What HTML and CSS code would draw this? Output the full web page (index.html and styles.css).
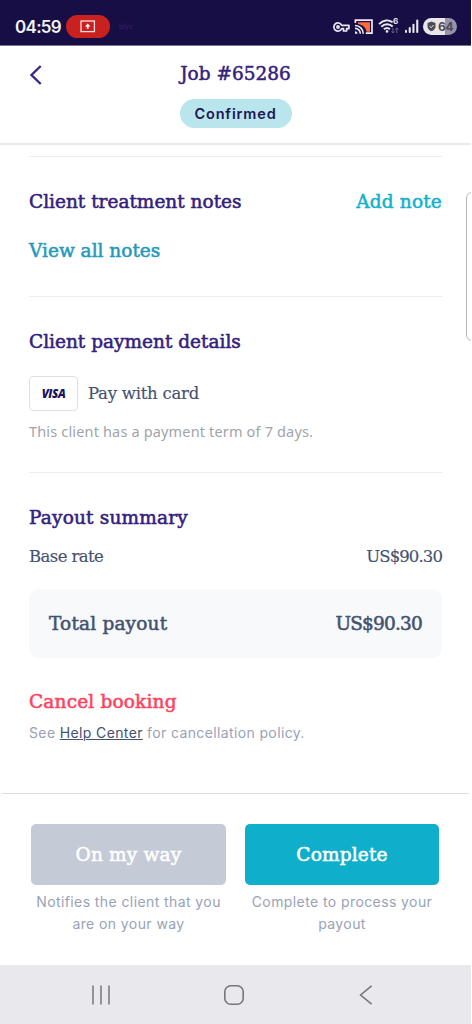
FILE: index.html
```html
<!DOCTYPE html>
<html lang="en">
<head>
<meta charset="utf-8">
<title>Job #65286</title>
<link rel="stylesheet" href="styles.css">
</head>
<body>
<div class="phone">
  <div class="status">
    <span class="clock">04:59</span>
    <span class="record">
      <svg width="16" height="13" viewBox="0 0 16 13"><rect x="1" y="1" width="13.4" height="10.6" fill="none" stroke="#f8dcdc" stroke-width="1.3"/><path d="M7.7 3.6 10.4 6.5H8.6V8.7H6.8V6.5H5z" fill="#fff"/></svg>
    </span>
    <span class="app-tag">blys</span>
    <span class="status-icons">
      <svg width="17" height="12" viewBox="0 0 17 12" fill="none" stroke="#e9e7f2" stroke-width="1.7"><path d="M8.7 4.3A4.1 4.1 0 1 0 8.7 7.7H10.5V10H13.6V7.7H15.9V4.3z" stroke-linejoin="round"/><circle cx="5" cy="6" r="1.1"/></svg>
      <svg width="20" height="16" viewBox="0 0 20 16"><path d="M4 3.2H16V12.8H12.6C11.7 8.4 8.5 5.7 4 5z" fill="#ff6a38"/><path d="M1.4 4V1.2H18V14.2H11.8" fill="none" stroke="#eeecf5" stroke-width="1.7"/><path d="M1 6.5A8 8 0 0 1 9.2 14.7M1 9.4A5.2 5.2 0 0 1 6.3 14.7" fill="none" stroke="#eeecf5" stroke-width="1.6"/><path d="M1 12.2A2.5 2.5 0 0 1 3.5 14.8H1z" fill="#eeecf5"/></svg>
      <span class="wifi">
        <svg width="22" height="17" viewBox="0 0 22 17" fill="none" stroke="#e9e7f2" stroke-width="1.9"><path d="M1 6.1C5.2 1.9 10.6 1.4 14.6 4.2M3.3 8.7C6.6 5.5 11.5 5.4 14.7 8.5M5.9 11.3C7.8 9.7 10.2 9.7 12 11.3"/><circle cx="9" cy="13.4" r="1.3" fill="#e9e7f2" stroke="none"/><path d="M14.9 10V15M13.3 13.4 14.9 15 16.5 13.4M18.8 15V10M17.2 11.6 18.8 10 20.4 11.6" stroke="#69628a" stroke-width="1"/></svg>
        <span class="wifi-gen">6</span>
      </span>
      <svg width="15" height="15" viewBox="0 0 15 15" fill="#e9e7f2"><rect x="1" y="10.8" width="2" height="3.2" rx="1"/><rect x="4.7" y="8" width="2.1" height="6" rx="1"/><rect x="8.4" y="4.8" width="2.1" height="9.2" rx="1"/><rect x="12.2" y=".5" width="2.1" height="13.5" rx="1"/></svg>
      <span class="battery">
        <svg width="9" height="11" viewBox="0 0 9 11"><path d="M4.5.5 8.5 2V5.5C8.5 7.8 7 9.2 4.5 10.3 2 9.2.5 7.8.5 5.5V2z" fill="#4c4a53"/><path d="M2.6 5.2 4.1 6.7 6.6 4" fill="none" stroke="#eee" stroke-width="1"/></svg>
        <span>64</span>
      </span>
    </span>
  </div>

  <header class="header">
    <svg class="back" width="14" height="22" viewBox="0 0 14 22"><path d="M11.7 2 2.5 11 11.7 20" fill="none" stroke="#3b2785" stroke-width="2.4"/></svg>
    <h1 class="slab title">Job #65286</h1>
    <span class="pill">Confirmed</span>
  </header>

  <main class="content">
    <section class="section notes">
      <div class="row"><h2 class="slab heading">Client treatment notes</h2><a class="slab heading wide add">Add note</a></div>
      <a class="slab heading view">View all notes</a>
    </section>
    <section class="section payment">
      <h2 class="slab heading">Client payment details</h2>
      <div class="method"><span class="card">VISA</span><span class="slab body">Pay with card</span></div>
      <p class="term">This client has a payment term of 7 days.</p>
    </section>
    <section class="section payout">
      <h2 class="slab heading wide">Payout summary</h2>
      <div class="row rate"><span class="slab body base">Base rate</span><span class="slab body amount">US$90.30</span></div>
      <div class="row total"><span class="slab heading wide">Total payout</span><span class="slab heading sum">US$90.30</span></div>
      <a class="slab heading wide cancel">Cancel booking</a>
      <p class="policy">See <a class="help">Help Center</a> for cancellation policy.</p>
    </section>
  </main>

  <footer class="actions">
    <div class="action"><button class="slab heading wide btn disabled">On my way</button><p class="caption">Notifies the client that you<br>are on your way</p></div>
    <div class="action"><button class="slab heading wide btn primary">Complete</button><p class="caption">Complete to process your<br>payout</p></div>
  </footer>

  <nav class="navbar">
    <svg width="20" height="20" viewBox="0 0 20 20" stroke="#77777b" stroke-width="1.5"><path d="M2 .5V19.5M10 .5V19.5M18 .5V19.5"/></svg>
    <svg class="home" width="22" height="22" viewBox="0 0 22 22"><rect x="1.8" y="1.8" width="18.4" height="18.4" rx="6" fill="none" stroke="#77777b" stroke-width="1.6"/></svg>
    <svg width="14" height="20" viewBox="0 0 14 20"><path d="M12.6.8 1.6 10 12.6 19.2" fill="none" stroke="#77777b" stroke-width="1.6"/></svg>
  </nav>
  <div class="edge-handle"></div>
</div>
</body>
</html>
```
FILE: styles.css
```css
* { box-sizing: border-box; }
body { margin: 0; background: #fff; font-family: Inter, sans-serif; }
h1, h2, p { margin: 0; }
svg { display: block; flex: none; }
.phone { position: relative; width: 471px; height: 1024px; overflow: hidden; display: flex; flex-direction: column; background: #fff; }

.status { height: 46px; flex: none; display: flex; align-items: center; padding: 8px 14px 0 15px; background: #170e45; border-bottom: 1px solid #777292; }
.clock { width: 51px; font-size: 17px; font-weight: 600; color: #f3f2f8; letter-spacing: -.7px; }
.record { display: flex; align-items: center; justify-content: center; width: 44px; height: 23px; border-radius: 12px; background: #c8211f; }
.app-tag { margin-left: 9px; font-size: 7px; color: #35207f; }
.status-icons { display: flex; align-items: center; margin-left: auto; gap: 4px; }
.wifi { position: relative; }
.wifi-gen { position: absolute; left: 15px; top: -2px; font-size: 8px; line-height: 10px; font-weight: 700; color: #e9e7f2; }
.battery { display: flex; align-items: center; gap: 2px; width: 34px; height: 17px; padding-left: 4px; border-radius: 9px; background: linear-gradient(90deg, #e9e7ec 64%, #9893aa 64%); font-size: 12px; font-weight: 700; letter-spacing: -.4px; color: #4c4a53; }

.header { position: relative; height: 99px; flex: none; display: flex; flex-direction: column; align-items: center; padding-top: 13px; border-bottom: 2px solid #e9e8ef; }
.back { position: absolute; left: 29px; top: 18px; }
.slab { font-family: "DejaVu Serif", serif; font-weight: 400; white-space: nowrap; }
.title { font-size: 18.5px; line-height: 30px; color: #34207d; -webkit-text-stroke: .5px; }
.pill { margin-top: 10px; width: 112px; height: 29px; border-radius: 15px; background: #b9e6ec; color: #1e1456; font-size: 14.5px; font-weight: 600; line-height: 30px; text-align: center; letter-spacing: .85px; }

.content { flex: none; height: 648px; padding: 11px 29px 0; }
.section { border-top: 1px solid #ededf0; width: 413px; }
.notes { height: 140px; padding-top: 30px; }
.payment { height: 176px; padding-top: 30px; }
.payout { padding-top: 30px; }
.row { display: flex; align-items: center; justify-content: space-between; }
.heading { display: block; font-size: 18.5px; line-height: 30px; color: #34207d; -webkit-text-stroke: .55px; }
.wide { letter-spacing: .18px; }
.add { color: #12b1cc; }
.view { margin-top: 19px; color: #2799ba; }
.body { font-size: 16.5px; line-height: 24px; letter-spacing: -.25px; color: #445270; -webkit-text-stroke: .15px; }
.base { letter-spacing: -.6px; }
.amount { letter-spacing: -.9px; }
.method { display: flex; align-items: center; gap: 10px; margin-top: 19px; }
.card { width: 49px; height: 35px; border: 1px solid #dfdfe9; border-radius: 4px; color: #1b1258; font: italic 800 11.5px/33px "Open Sans", sans-serif; text-align: center; letter-spacing: -.4px; }
.term { margin-top: 10px; font: 14.5px/20px "Noto Sans", sans-serif; letter-spacing: .16px; color: #a2a3aa; }
.rate { height: 24px; margin-top: 12px; }
.total { height: 69px; margin-top: 20px; padding: 0 20px; border-radius: 9px; background: #f8f9fb; }
.total .heading { color: #445270; }
.total .sum { letter-spacing: -.8px; }
.payout .cancel { margin-top: 29px; color: #ff4260; }
.policy { margin-top: 6px; font-size: 14px; line-height: 20px; letter-spacing: .37px; color: #98a2b8; }
.help { color: #445270; text-decoration: underline; text-decoration-thickness: 1px; }

.actions { flex: none; height: 172px; margin: 0 2px; padding: 30px 29px 0; border-top: 1px solid #dcdde5; display: grid; grid-template-columns: 195px 194px; column-gap: 19px; align-content: start; }
.btn { width: 100%; height: 61px; padding: 0; border: 0; border-radius: 5px; color: #fff; line-height: 61px; }
.disabled { background: #c4cad6; }
.primary { background: #0fafcb; }
.caption { margin-top: 6px; font-size: 14px; line-height: 22px; letter-spacing: .41px; color: #98a2b8; text-align: center; white-space: nowrap; }

.navbar { flex: 1; display: flex; align-items: center; justify-content: space-between; padding: 0 98px 0 91px; background: #e9e9ed; }
.home { margin-right: 3px; }
.edge-handle { position: absolute; left: 466px; top: 192px; width: 12px; height: 149px; border: 1px solid #b8b8b8; border-radius: 6px; background: #fff; }
```
